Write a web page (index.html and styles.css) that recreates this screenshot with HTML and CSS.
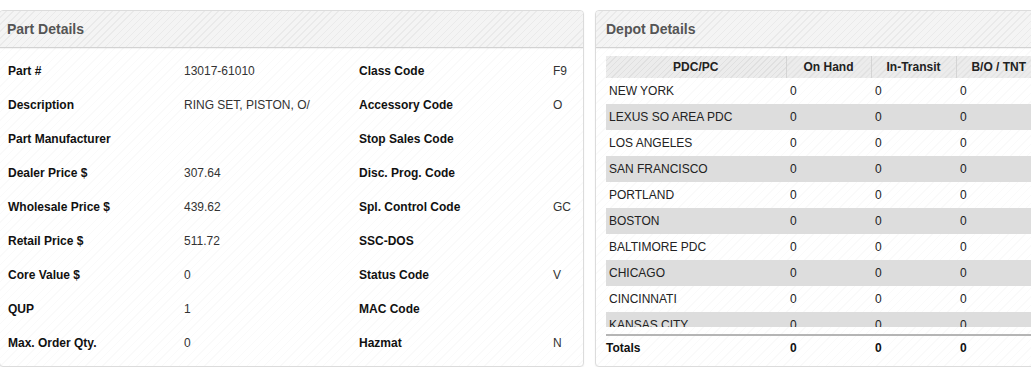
FILE: index.html
```html
<!DOCTYPE html>
<html lang="en">
<head>
  <meta charset="UTF-8" />
  <meta name="viewport" content="width=device-width, initial-scale=1" />
  <title>Part Inquiry</title>
  <link rel="stylesheet" href="styles.css">
</head>
<body>

  <div class="page">
    <div class="panel part">
      <div class="panel-head">Part Details</div>
      <div class="panel-body">
        <div class="details">
          <span class="lbl">Part #</span><span class="val">13017-61010</span>
          <span class="lbl">Class Code</span><span class="val">F9</span>

          <span class="lbl">Description</span><span class="val">RING SET, PISTON, O/</span>
          <span class="lbl">Accessory Code</span><span class="val">O</span>

          <span class="lbl">Part Manufacturer</span><span class="val"></span>
          <span class="lbl">Stop Sales Code</span><span class="val"></span>

          <span class="lbl">Dealer Price $</span><span class="val">307.64</span>
          <span class="lbl">Disc. Prog. Code</span><span class="val"></span>

          <span class="lbl">Wholesale Price $</span><span class="val">439.62</span>
          <span class="lbl">Spl. Control Code</span><span class="val">GC</span>

          <span class="lbl">Retail Price $</span><span class="val">511.72</span>
          <span class="lbl">SSC-DOS</span><span class="val"></span>

          <span class="lbl">Core Value $</span><span class="val">0</span>
          <span class="lbl">Status Code</span><span class="val">V</span>

          <span class="lbl">QUP</span><span class="val">1</span>
          <span class="lbl">MAC Code</span><span class="val"></span>

          <span class="lbl">Max. Order Qty.</span><span class="val">0</span>
          <span class="lbl">Hazmat</span><span class="val">N</span>
        </div>
      </div>
    </div>

    <div class="panel depot">
      <div class="panel-head">Depot Details</div>
      <div class="panel-body">
        <table class="grid">
          <thead>
            <tr>
              <th class="c-name">PDC/PC</th>
              <th class="c-num">On Hand</th>
              <th class="c-num">In-Transit</th>
              <th class="c-num">B/O / TNT</th>
            </tr>
          </thead>
        </table>
        <div class="scroller">
          <table class="grid">
            <tbody>
              <tr><td class="c-name">NEW YORK</td><td class="c-num">0</td><td class="c-num">0</td><td class="c-num">0</td></tr>
              <tr><td class="c-name">LEXUS SO AREA PDC</td><td class="c-num">0</td><td class="c-num">0</td><td class="c-num">0</td></tr>
              <tr><td class="c-name">LOS ANGELES</td><td class="c-num">0</td><td class="c-num">0</td><td class="c-num">0</td></tr>
              <tr><td class="c-name">SAN FRANCISCO</td><td class="c-num">0</td><td class="c-num">0</td><td class="c-num">0</td></tr>
              <tr><td class="c-name">PORTLAND</td><td class="c-num">0</td><td class="c-num">0</td><td class="c-num">0</td></tr>
              <tr><td class="c-name">BOSTON</td><td class="c-num">0</td><td class="c-num">0</td><td class="c-num">0</td></tr>
              <tr><td class="c-name">BALTIMORE PDC</td><td class="c-num">0</td><td class="c-num">0</td><td class="c-num">0</td></tr>
              <tr><td class="c-name">CHICAGO</td><td class="c-num">0</td><td class="c-num">0</td><td class="c-num">0</td></tr>
              <tr><td class="c-name">CINCINNATI</td><td class="c-num">0</td><td class="c-num">0</td><td class="c-num">0</td></tr>
              <tr><td class="c-name">KANSAS CITY</td><td class="c-num">0</td><td class="c-num">0</td><td class="c-num">0</td></tr>
            </tbody>
          </table>
        </div>
        <table class="grid totals">
          <tbody>
            <tr><td class="c-name">Totals</td><td class="c-num">0</td><td class="c-num">0</td><td class="c-num">0</td></tr>
          </tbody>
        </table>
      </div>
    </div>
  </div>

</body>
</html>
```

FILE: styles.css
```css
* {
  box-sizing: border-box;
}
body {
  margin: 0;
  font-family: "Liberation Sans", Arial, sans-serif;
  font-size: 12px;
  color: #222;
  background: #fff;
  overflow: hidden;
}
.page {
  display: flex;
  gap: 11px;
  padding-top: 10px;
  margin-left: -1px;
  width: 1200px;
}
.panel {
  flex-shrink: 0;
  border: 1px solid #dcdcdc;
  border-radius: 4px;
  background: #fff repeating-linear-gradient(135deg, #fff 0, #fff 5px, #fafafa 5px, #fafafa 6px);
  box-shadow: 0 1px 2px rgba(0,0,0,0.06);
}
.part {
  width: 585px;
  height: 357px;
}
.depot {
  width: 590px;
  height: 357px;
}
.panel-head {
  height: 37px;
  line-height: 36px;
  padding: 0 7px;
  font-size: 14px;
  font-weight: bold;
  color: #555;
  border-radius: 4px 4px 0 0;
  border-bottom: 1px solid #d2d2d2;
  background: #f1f1f1 repeating-linear-gradient(135deg, #f4f4f4 0, #f4f4f4 4px, #eaeaea 4px, #eaeaea 5px);
  box-shadow: 0 1px 1px rgba(0,0,0,0.05);
}
.depot .panel-head {
  padding-left: 10px;
}
.details {
  display: grid;
  grid-template-columns: 176px 175px 194px 1fr;
  grid-auto-rows: 34px;
  align-items: center;
  padding: 6px 0 0 8px;
}
.lbl {
  font-weight: bold;
  color: #111;
}
.val {
  color: #333;
}
.depot .panel-body {
  padding: 8px 0 0 10px;
}
.grid {
  border-collapse: collapse;
  table-layout: fixed;
  width: 435px;
}
.grid .c-name {
  width: 180px;
}
.grid .c-num {
  width: 85px;
}
.grid th {
  height: 22px;
  padding: 0;
  font-weight: bold;
  color: #222;
  text-align: center;
  border-left: 1px solid #d4d4d4;
  background: #e6e6e6 repeating-linear-gradient(135deg, #ececec 0, #ececec 3px, #e0e0e0 3px, #e0e0e0 4px);
}
.grid th:first-child {
  border-left: none;
}
.scroller {
  height: 249px;
  overflow: hidden;
}
.grid td {
  height: 26px;
  padding: 0 3px;
  color: #222;
}
.grid td.c-num {
  padding-left: 4px;
}
.grid tbody tr:nth-child(even) td {
  background: #dddddd;
}
.totals {
  margin-top: 7px;
  border-top: 2px solid #b5b5b5;
}
.totals td {
  height: 24px;
  font-weight: bold;
  color: #111;
}
.totals td.c-name {
  padding-left: 0;
}
.totals tbody tr:nth-child(even) td {
  background: none;
}
```
